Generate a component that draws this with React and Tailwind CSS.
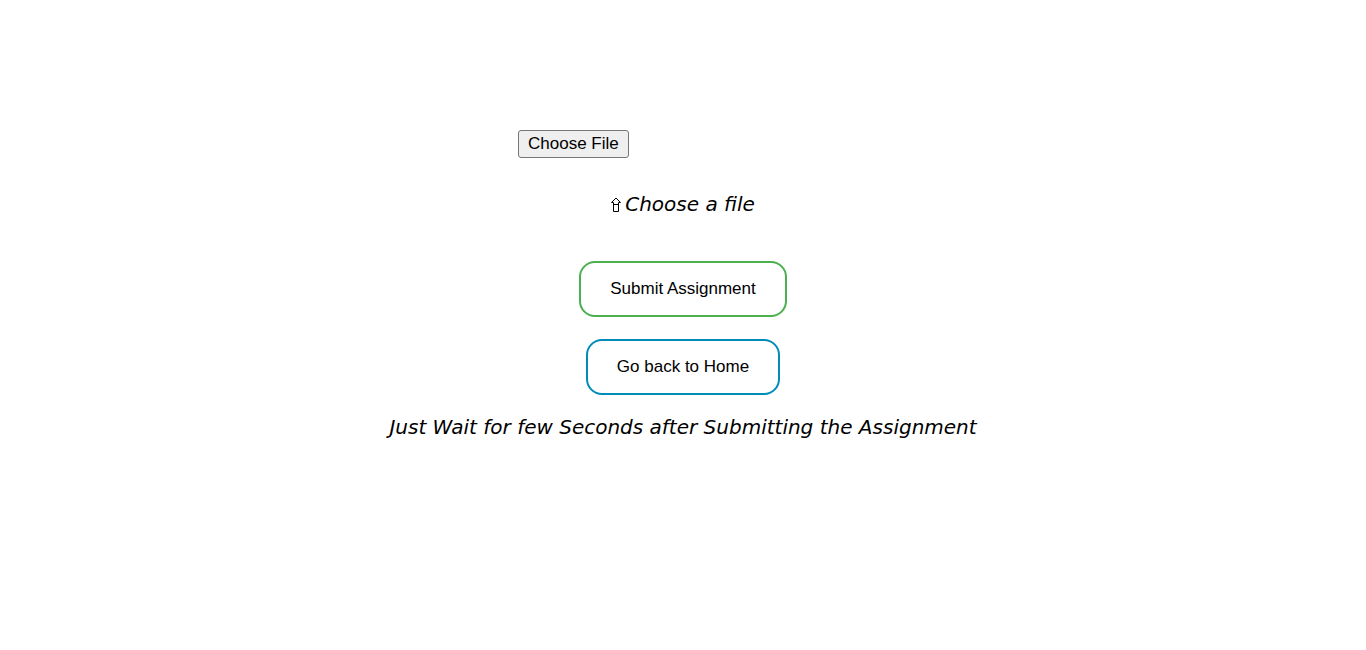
export default function App() {
  return (
    <main className="flex flex-col items-center bg-white px-4 pt-[130px] text-black">
      <form
        className="flex w-full flex-col items-center"
        onSubmit={(event) => event.preventDefault()}
      >
        <input
          id="assignment"
          type="file"
          className="h-7 w-full max-w-[330px] font-['Liberation_Sans',Arial,sans-serif] text-[17px] text-transparent file:m-0 file:h-7 file:rounded-[3px] file:border file:border-solid file:border-[#767676] file:bg-[#efefef] file:px-[9px] file:py-0 file:text-[17px] file:font-normal file:leading-6 file:text-black"
        />
        <label
          htmlFor="assignment"
          className="mt-8 flex items-center gap-1 font-['DejaVu_Sans',sans-serif] text-[20px] leading-7 italic"
        >
          <svg width="10" height="16" viewBox="0 0 10 16" fill="none" stroke="currentColor" aria-hidden="true">
            <path d="M0.500 6.500 5 2l4.500 4.500h-2v9h-5v-9zM2.500 8.500h5" />
          </svg>
          Choose a file
        </label>
        <button
          type="submit"
          className="mt-[43px] h-14 rounded-2xl border-2 border-[#4caf50] bg-white px-[29px] font-['Liberation_Sans',Arial,sans-serif] text-[17px]"
        >
          Submit Assignment
        </button>
      </form>
      <button
        type="button"
        className="mt-[22px] h-14 rounded-2xl border-2 border-[#008cba] bg-white px-[29px] font-['Liberation_Sans',Arial,sans-serif] text-[17px]"
      >
        Go back to Home
      </button>
      <p className="mt-[18px] text-center font-['DejaVu_Sans',sans-serif] text-[20px] leading-7 italic">
        Just Wait for few Seconds after Submitting the Assignment
      </p>
    </main>
  );
}
